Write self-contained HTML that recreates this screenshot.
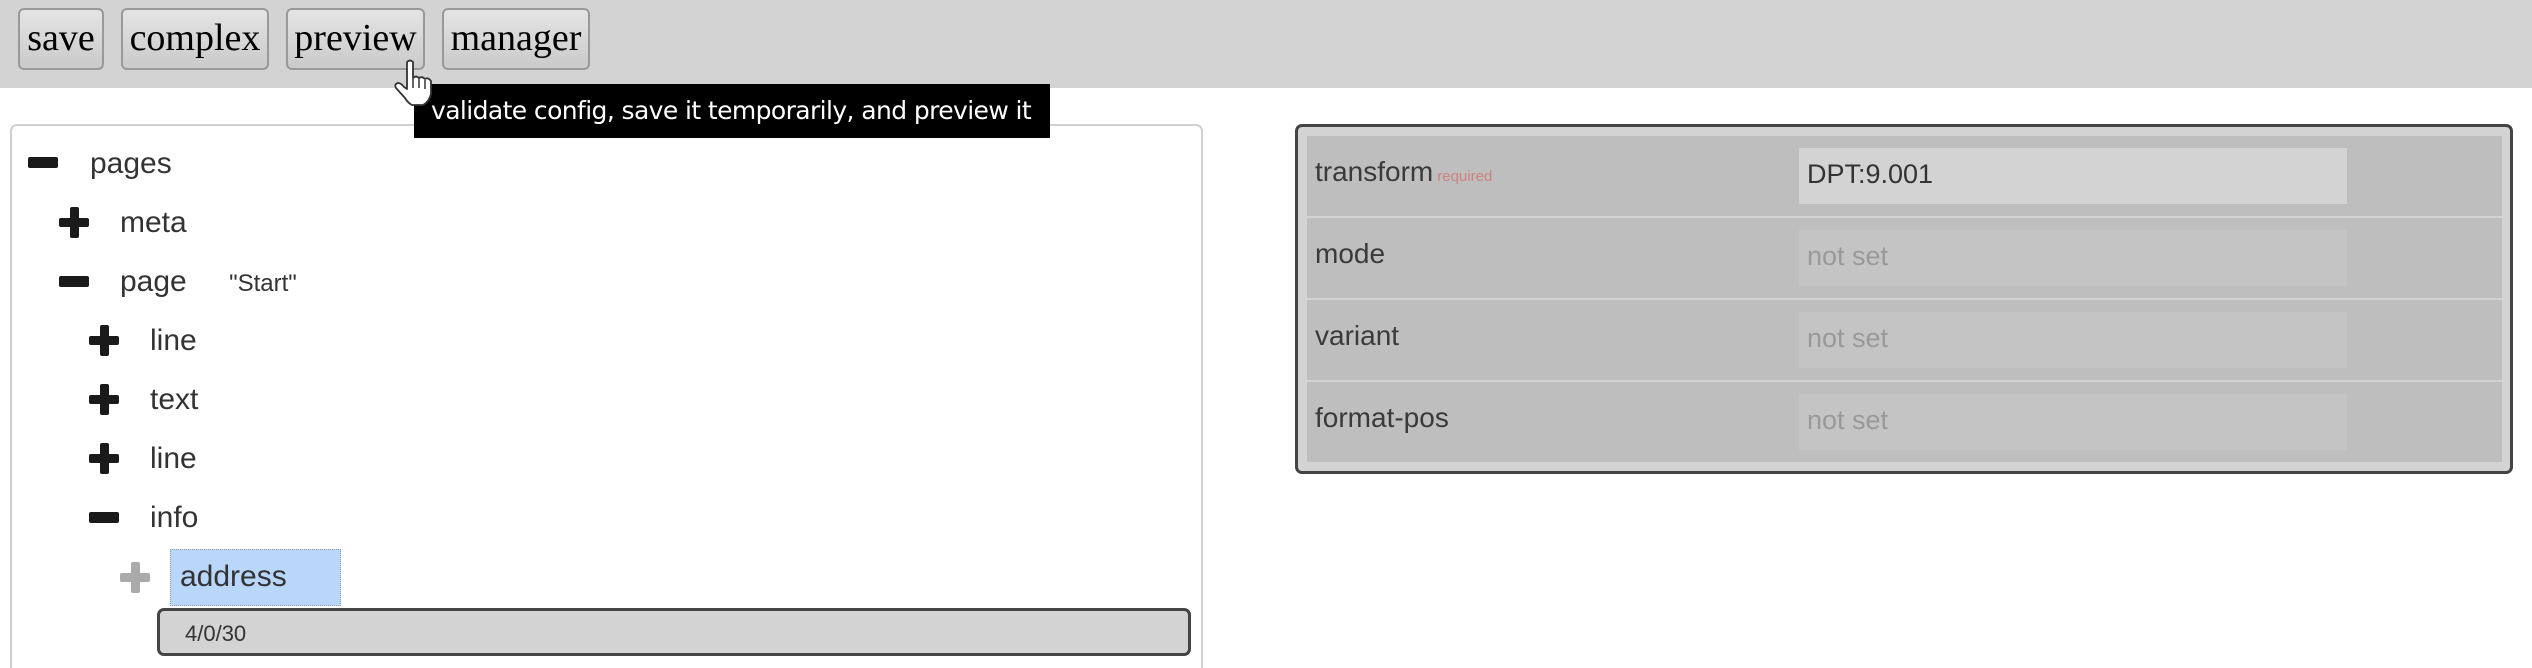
<!DOCTYPE html>
<html style="width:2532px;height:668px;overflow:hidden"><head><meta charset="utf-8"><style>
*{margin:0;padding:0;box-sizing:border-box}
body{width:2532px;height:668px;overflow:hidden;background:#fff;position:relative;font-family:"Liberation Sans",Arial,sans-serif}
.bar{position:absolute;left:0;top:0;width:2532px;height:88px;background:#d3d3d3}
.btn{position:absolute;top:8px;height:62px;border:2px solid #999;border-radius:6px;background:linear-gradient(#e4e4e4,#cacaca);font-family:"Liberation Serif",serif;font-size:38px;color:#000;text-align:center;line-height:56px}
.tip{position:absolute;left:414px;top:84px;width:636px;height:54px;background:#000;color:#fff;font-family:"DejaVu Sans",sans-serif;font-size:25px;letter-spacing:-0.6px;line-height:54px;padding-left:17px;white-space:nowrap;overflow:hidden}
.lp{position:absolute;left:10px;top:124px;width:1193px;height:544px;border:2px solid #d0d0d0;border-bottom:none;border-radius:7px 7px 0 0}
.row{position:absolute;font-size:30px;color:#333;line-height:36px}
.mi{position:absolute;width:30px;height:11px;background:#1a1a1a;border-radius:2px}
.pl{position:absolute;width:30px;height:31px;color:#1a1a1a}
.pl:before{content:"";position:absolute;left:0;top:11px;width:30px;height:9px;background:currentColor;border-radius:2px}
.pl:after{content:"";position:absolute;left:11px;top:0;width:9px;height:31px;background:currentColor;border-radius:2px}
.rp{position:absolute;left:1295px;top:124px;width:1218px;height:350px;border:3px solid #444;border-radius:7px;background:#d3d3d3}
.r{position:absolute;left:9px;width:1195px;height:80px;background:#bebebe}
.lab{position:absolute;left:8px;top:20px;font-size:28px;color:#3a3a3a}
.in{position:absolute;left:492px;top:12px;width:548px;height:56px;background:#c4c4c4;font-size:27px;color:#999;padding-left:8px;line-height:52px}
</style></head><body>
<div class="bar"></div>
<div class="btn" style="left:18px;width:86px">save</div>
<div class="btn" style="left:121px;width:148px">complex</div>
<div class="btn" style="left:286px;width:139px">preview</div>
<div class="btn" style="left:442px;width:148px">manager</div>

<div class="lp"></div>
<div class="mi" style="left:28px;top:157px"></div><div class="row" style="left:90px;top:146px">pages</div>
<div class="pl" style="left:59px;top:207px"></div><div class="row" style="left:120px;top:205px">meta</div>
<div class="mi" style="left:59px;top:276px"></div><div class="row" style="left:120px;top:264px">page <span style="font-size:24px;margin-left:34px">"Start"</span></div>
<div class="pl" style="left:89px;top:325px"></div><div class="row" style="left:150px;top:323px">line</div>
<div class="pl" style="left:89px;top:384px"></div><div class="row" style="left:150px;top:382px">text</div>
<div class="pl" style="left:89px;top:443px"></div><div class="row" style="left:150px;top:441px">line</div>
<div class="mi" style="left:89px;top:512px"></div><div class="row" style="left:150px;top:500px">info</div>
<div class="pl" style="left:120px;top:562px;color:#aaa"></div>
<div style="position:absolute;left:170px;top:549px;width:171px;height:57px;background:#b9d6fb;border:1px dotted #999"></div>
<div class="row" style="left:180px;top:559px">address</div>
<div style="position:absolute;left:157px;top:608px;width:1034px;height:48px;background:#d3d3d3;border:3px solid #444;border-radius:7px;font-size:22px;color:#333;padding:10px 0 0 25px">4/0/30</div>

<div class="rp">
<div class="r" style="top:9px"><div class="lab">transform<span style="font-size:15px;color:#d08080;margin-left:4px">required</span></div><div class="in" style="background:#d3d3d3;color:#333">DPT:9.001</div></div>
<div class="r" style="top:91px"><div class="lab">mode</div><div class="in">not set</div></div>
<div class="r" style="top:173px"><div class="lab">variant</div><div class="in">not set</div></div>
<div class="r" style="top:255px"><div class="lab">format-pos</div><div class="in">not set</div></div>
</div>

<div class="tip">validate config, save it temporarily, and preview it</div>
<svg style="position:absolute;left:390px;top:58px" width="48" height="50" viewBox="0 0 48 50">
<path d="M17 4 q3-3 6 0 L23 20 q3-3 6 0 q3-2 6 1 q3-2 6 2 L41 36 q-2 8-8 11 L22 47 q-4-2-7-7 L6 30 q-2-4 2-5 q3 0 6 4 L17 31 Z" fill="#fff" stroke="#333" stroke-width="1.8" stroke-linejoin="round"/>
<path d="M23 20 L23 30 M29 20 L29 30 M35 22 L35 31" stroke="#333" stroke-width="1.5"/>
</svg>
</body></html>
